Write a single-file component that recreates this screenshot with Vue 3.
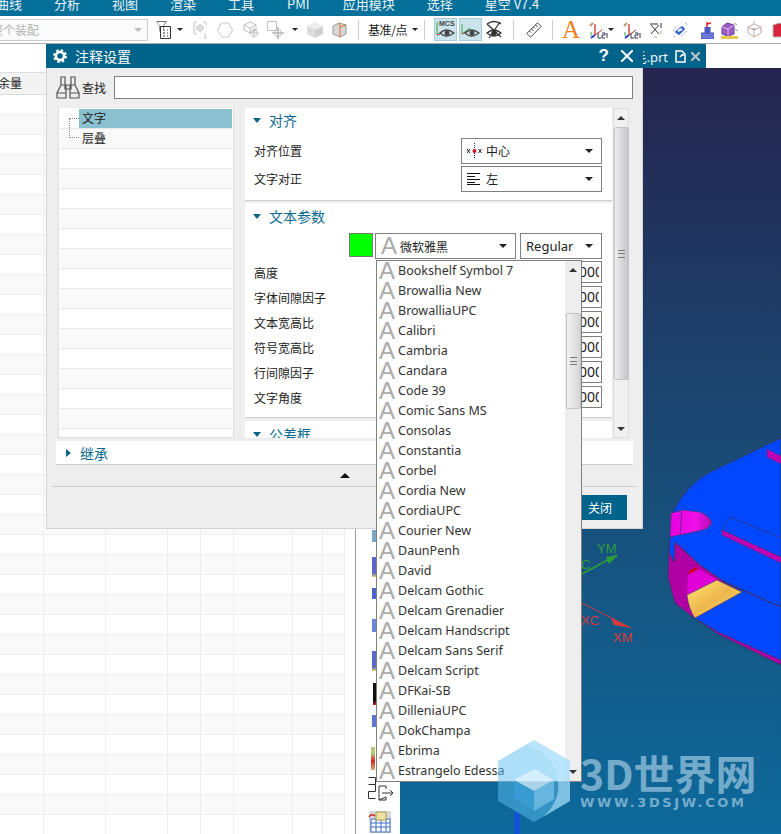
<script setup>
const menus = ['曲线', '分析', '视图', '渲染', '工具', 'PMI', '应用模块', '选择', '星空 V7.4']
const colWidths = [44, 62, 62, 33, 33, 59, 30, 22]
const tableRows = Array.from({ length: 37 }, (_, i) => i)
const treeRows = Array.from({ length: 17 }, (_, i) => i)
const treeLabels = ['文字', '层叠']
const paramLabels = ['高度', '字体间隙因子', '文本宽高比', '符号宽高比', '行间隙因子', '文字角度']
const fonts = [
  'Bookshelf Symbol 7', 'Browallia New', 'BrowalliaUPC', 'Calibri', 'Cambria', 'Candara',
  'Code 39', 'Comic Sans MS', 'Consolas', 'Constantia', 'Corbel', 'Cordia New', 'CordiaUPC',
  'Courier New', 'DaunPenh', 'David', 'Delcam Gothic', 'Delcam Grenadier', 'Delcam Handscript',
  'Delcam Sans Serif', 'Delcam Script', 'DFKai-SB', 'DilleniaUPC', 'DokChampa', 'Ebrima',
  'Estrangelo Edessa'
]
</script>

<template>
  <div class="app">
    <div class="menu">
      <span v-for="m in menus" :key="m" class="menu-item">{{ m }}</span>
    </div>

    <div class="toolbar">
      <div class="scope-combo"><span class="scope-text">整个装配</span><i class="caret grey"></i></div>

      <svg class="ic-filter" width="16" height="20" viewBox="0 0 16 20" fill="none" stroke="#333">
        <path d="M.5 1.500h10l-3 4v3" stroke="#777" /><path d="M.5 1.500l3 4v6" stroke="#999" /><path d="M4.500 6.500h10v12h-10z" /><path d="M7 10h2M11 10h1M7 13h2M11 13h1M7 16h2M11 16h1" />
      </svg>
      <i class="caret ml5"></i>
      <svg class="ic-sel" width="17" height="20" viewBox="0 0 17 20" fill="none" stroke="#c4c4c4">
        <path d="M4 2H1v12h3M10 2h3v3" /><circle cx="7" cy="8" r="3" /><path d="M3 8h8M7 4v8M11 13l2 3-2 2h3" />
      </svg>
      <svg class="ic-hex" width="16" height="16" viewBox="0 0 16 16" fill="none" stroke="#c8c8c8"><path d="M4.500 1h7l4 7-4 7h-7l-4-7z" /></svg>
      <svg class="ic-cube" width="16" height="18" viewBox="0 0 16 18" fill="none" stroke="#c0c0c0">
        <path d="M1 4l6-3 6 3v5l-6 3-6-3zM1 4l6 3 6-3M7 7v5" /><circle cx="11" cy="12" r="3.500" /><path d="M6 12h10M11 7v10" />
      </svg>
      <svg class="ic-cross" width="18" height="20" viewBox="0 0 18 20" fill="none" stroke="#c0c0c0">
        <path d="M.5 1.500h9v9h-9z" /><circle cx="11" cy="13" r="3.500" /><path d="M5 13h12M11 7v12" stroke="#999" />
      </svg>
      <i class="caret ml7"></i>
      <svg class="ic-gcube" width="16" height="16" viewBox="0 0 16 16">
        <path d="M8 0l8 4-8 4-8-4z" fill="#ececec" /><path d="M0 4l8 4v8l-8-4z" fill="#dcdcdc" /><path d="M16 4l-8 4v8l8-4z" fill="#d0d0d0" />
      </svg>
      <svg class="ic-ocube" width="15" height="16" viewBox="0 0 15 16">
        <path d="M1 4l6-3 7 2v9l-6 3-7-3z" fill="#d8d8d8" stroke="#999" /><path d="M8 15V5l6-2M7 1l1 4" fill="none" stroke="#e2742a" />
      </svg>
      <i class="sep sep-a"></i>
      <span class="datum">基准/点</span>
      <i class="caret ml6"></i>
      <i class="sep sep-b"></i>

      <div class="toggle ic-mcs">
        <svg width="21" height="21" viewBox="0 0 21 21" fill="none">
          <path d="M2 3v13" stroke="#3aa64a" /><path d="M2 16l5-3" stroke="#3aa64a" /><path d="M2 16l3-1" stroke="#d33" />
          <path d="M5 14q6-6 14 0q-8 6-14 0z" stroke="#444" stroke-width="1.300" /><circle cx="12" cy="14" r="2.500" fill="#444" />
          <text x="4" y="7" class="mcs-text">MCS</text>
        </svg>
      </div>
      <div class="toggle ic-eye">
        <svg width="21" height="21" viewBox="0 0 21 21" fill="none">
          <path d="M2 5v10" stroke="#3aa64a" /><path d="M2 15l8-6" stroke="#3aa64a" /><path d="M2 15l4-2" stroke="#d33" />
          <path d="M5 14q6-6 14 0q-8 6-14 0z" stroke="#444" stroke-width="1.300" /><circle cx="12" cy="14" r="2.500" fill="#444" />
        </svg>
      </div>
      <svg class="ic-eyeoff" width="16" height="20" viewBox="0 0 16 20" fill="none" stroke="#333" stroke-width="1.300">
        <path d="M1 4q7-5 14 0M1 4l14 13" /><path d="M1 13q7-6 14 0q-7 6-14 0z" /><circle cx="8" cy="13" r="2" fill="#333" /><path d="M14 2L3 18" />
      </svg>
      <i class="sep sep-c"></i>
      <svg class="ic-ruler" width="16" height="16" viewBox="0 0 16 16" fill="none" stroke="#444">
        <path d="M11.500.800l3.700 3.700L4.500 15.200.800 11.500zM9.500 3l2 2M7.500 5l1.500 1.500M5.500 7l2 2M3.500 9l1.500 1.500" />
      </svg>
      <i class="sep sep-d"></i>
      <span class="big-a">A</span>
      <svg class="ic-axes" width="21" height="20" viewBox="0 0 21 20" fill="none">
        <path d="M7 4v11" stroke="#c33" stroke-width="1.300" /><path d="M7 15l7-5" stroke="#c33" /><path d="M7 15l-4 3" stroke="#2a3fc4" stroke-width="2" /><path d="M3 12v4" stroke="#3aa64a" />
        <path d="M2 6l3-3" stroke="#b89a70" stroke-width="2" /><path d="M10 13v5h3M14 13h3v2h-3v3h3M19 13v5" stroke="#335" />
      </svg>
      <i class="caret ml-1"></i>
      <svg class="ic-axes2" width="18" height="20" viewBox="0 0 18 20" fill="none">
        <path d="M6 4v11" stroke="#c33" stroke-width="1.300" /><path d="M6 15l7-5" stroke="#c33" /><path d="M6 15l-4 3" stroke="#2a3fc4" stroke-width="2" /><path d="M2 12v4" stroke="#3aa64a" />
        <path d="M1 6l3-3" stroke="#b89a70" stroke-width="2" /><path d="M8 13v5h3M12 13h3v2h-3v3h3M17 13v5" stroke="#335" />
      </svg>
      <svg class="ic-x" width="14" height="18" viewBox="0 0 14 18" fill="none" stroke="#333">
        <path d="M1 3h8M12 2v5M2 4l8 9M10 4L2 13" /><path d="M12 10v3M5 16h3" stroke="#c9a06a" />
      </svg>
      <svg class="ic-blue" width="17" height="16" viewBox="0 0 17 16" fill="none">
        <path d="M3 10l7-6 3 3-6 6z" fill="#3a62d0" stroke="#6a8ee0" /><path d="M6 9l4-2" stroke="#fff" stroke-width="2" /><path d="M1 14l2 1M13 1l3 2M1 9l4-5M9 14l6-5" stroke="#8aa8e8" stroke-dasharray="2 1" />
      </svg>
      <svg class="ic-pin" width="13" height="18" viewBox="0 0 13 18">
        <path d="M6 1v6M6 3l4-1" stroke="#d22" stroke-width="1.500" fill="none" /><rect x="3.500" y="6" width="6" height="7" fill="#4a58c0" /><rect x="0" y="12" width="13" height="6" fill="#6e78d8" stroke="#4a58c0" />
      </svg>
      <svg class="ic-box" width="17" height="18" viewBox="0 0 17 18">
        <path d="M1 6l5-4 7 2v9l-6 2-6-2z" fill="#9b5cc4" stroke="#6a3a98" /><path d="M1 6l6 2 6-4M7 8v7" fill="none" stroke="#d8b8f0" /><path d="M0 15h17v3H0z" fill="#e8c84a" /><path d="M13 2l3 2M14 8l3 2" stroke="#c88" />
      </svg>
      <svg class="ic-wire" width="15" height="18" viewBox="0 0 15 18" fill="none" stroke="#c8a8a8">
        <path d="M1 6l6-3 7 3-7 3zM1 6v6l6 4 7-4V6M7 9v7M7 0v3M14 9h1" /><path d="M5 8l4 0" stroke="#999" />
      </svg>
      <svg class="ic-red" width="17" height="18" viewBox="0 0 17 18"><path d="M1 4l6-2 9 2v12H1z" fill="#d8243a" stroke="#bbb" /></svg>
    </div>

    <div class="workspace">
      <div class="table">
        <div class="table-head"><span class="table-title">余量</span></div>
        <div v-for="r in tableRows" :key="r" class="table-row" :class="{ tint: r % 2 === 1 }">
          <span v-for="(w, c) in colWidths" :key="c" class="table-cell" :style="{ width: w + 'px' }"></span>
        </div>
      </div>

      <div class="side-tools">
        <i class="peek peek-1"></i><i class="peek peek-2"></i><i class="peek peek-3"></i><i class="peek peek-4"></i>
        <i class="peek peek-5"></i><i class="peek peek-6"></i><i class="peek peek-7"></i><i class="peek peek-8"></i>
        <svg class="side-exit" width="26" height="26" viewBox="0 0 26 26" fill="none" stroke="#333">
          <path d="M.5 .5h7v7h-7M7.500 7.500v7h-7v7h7" /><path d="M11 9h7v3M18 20v3h-7zM11 9v14M14 16h11M22 13l3 3-3 3" />
        </svg>
        <svg class="side-table" width="24" height="24" viewBox="0 0 24 24">
          <rect x="1" y="1" width="22" height="22" fill="#d8d8d8" /><rect x="3" y="9" width="19" height="13" fill="#fff" stroke="#3a6cc8" />
          <path d="M3 13h19M3 17h19M8 9v13M13 9v13M18 9v13" stroke="#3a6cc8" /><path d="M8 2h10v8H8z" fill="#efe2a0" stroke="#a89850" />
          <path d="M1 7q3-4 6-1" fill="none" stroke="#c22" stroke-width="1.500" />
        </svg>
      </div>

      <div class="viewport">
        <div class="tabs">
          <div class="tab">
            <span class="tab-name">毛.prt</span>
            <svg width="11" height="13" viewBox="0 0 11 13" fill="none" stroke="#fff" stroke-width="1.500"><path d="M1 1h6l3 3v8H1zM5 7l3-3M8 4v2" /></svg>
            <svg class="tab-close" width="9" height="9" viewBox="0 0 9 9" stroke="#b8c4ca" stroke-width="2"><path d="M0 0l9 9M9 0L0 9" /></svg>
          </div>
        </div>
        <div class="canvas">
          <svg class="scene" viewBox="400 68 381 766" width="381" height="766">
            <defs>
              <linearGradient id="yellow-face" x1="0" y1="0" x2="1" y2="1">
                <stop offset="0" stop-color="#ffe877" /><stop offset=".5" stop-color="#eeb64c" /><stop offset="1" stop-color="#ffe070" />
              </linearGradient>
              <linearGradient id="notch-face" x1="0" y1="0" x2="1" y2="0">
                <stop offset="0" stop-color="#e600e0" /><stop offset=".6" stop-color="#f010e8" /><stop offset="1" stop-color="#b010b0" />
              </linearGradient>
            </defs>
            <path d="M669 540L668 577L672 593L675 603L690 615L718 634L781 665V600L690 540Z" fill="#b000a4" stroke="#343a68" />
            <path d="M781 438L710 472Q685 486 673 512L670 537L669 552L674 562L675 542L700 565L723 581L781 607Z" fill="#0047ff" stroke="#343a68" />
            <path d="M671 513L683 510L700 512Q708 515 712 522Q710 528 703 530L680 535L670 537Z" fill="url(#notch-face)" stroke="#343a68" stroke-width=".7" />
            <path d="M682 511L680 535" stroke="#343a68" stroke-width=".7" />
            <path d="M781 538L730 517L722 530L781 558Z" fill="#0047ff" stroke="#343a68" stroke-width=".7" />
            <path d="M722 530L781 557V563L722 535Z" fill="#c000b4" stroke="#343a68" stroke-width=".5" />
            <path d="M767 449L781 456V464L767 457Z" fill="#c000b4" stroke="#343a68" stroke-width=".5" />
            <path d="M695 618L742 592L723 582L781 607V660L718 632Z" fill="#0047ff" stroke="#343a68" stroke-width=".7" />
            <path d="M688 573Q692 567 699 568L692 574Z" fill="#d00020" />
            <path d="M688 575L699 569L717 580L687 595Z" fill="#e000d8" />
            <path d="M687 595L717 580L742 592L695 618Q689 610 687 595Z" fill="url(#yellow-face)" stroke="#343a68" stroke-width=".5" />

            <path d="M582 574L617 555" stroke="#2e9e3a" stroke-width="1.500" />
            <path d="M606 557L618 555L609 564Z" fill="#2e9e3a" />
            <text x="597" y="553" class="axis green">YM</text>
            <text x="581" y="569" class="axis green">C</text>
            <path d="M582 603L631 628" stroke="#d83a3a" />
            <path d="M611 618L631 628L614 625Z" fill="#d83a3a" />
            <text x="581" y="625" class="axis red">XC</text>
            <text x="613" y="642" class="axis red">XM</text>
            <path d="M517 812V834" stroke="#1450e0" stroke-width="5" />
            <text x="514" y="798" class="axis blue">Z</text>
          </svg>
        </div>
      </div>
    </div>

    <section class="dialog">
      <header class="dialog-title">
        <svg width="14" height="14" viewBox="0 0 14 14" fill="none" stroke="#fff">
          <circle cx="7" cy="7" r="4" stroke-width="2.500" /><circle cx="7" cy="7" r="5.800" stroke-width="2.200" stroke-dasharray="2.500 2.050" />
        </svg>
        <span class="dialog-name">注释设置</span>
        <span class="help">?</span>
        <svg class="dialog-close" width="12" height="12" viewBox="0 0 12 12" stroke="#fff" stroke-width="2"><path d="M0 0l12 12M12 0L0 12" /></svg>
      </header>

      <div class="search">
        <svg width="24" height="23" viewBox="0 0 24 23" fill="none" stroke="#555" stroke-width="1.200">
          <path d="M5 1h4v8h-4zM15 1h4v8h-4zM9 9h6v4H9zM5 9L1 17v5h9V9M19 9l4 8v5h-9V9M1 17h9M14 17h9" />
        </svg>
        <span class="search-label">查找</span>
        <div class="search-input"></div>
      </div>

      <div class="columns">
        <div class="tree">
          <div v-for="r in treeRows" :key="r" class="tree-row" :class="{ tint: r % 2 === 1 }">
            <span v-if="treeLabels[r]" class="tree-label" :class="{ selected: r === 0 }">{{ treeLabels[r] }}</span>
          </div>
          <i class="tree-guide"></i>
        </div>

        <div class="panel">
          <div class="panel-body">
            <div class="group">
              <div class="group-head raised"><i class="tri-down"></i>对齐</div>
              <div class="field first-field">
                <label>对齐位置</label>
                <div class="combo wide">
                  <svg width="15" height="16" viewBox="0 0 15 16"><path d="M7.500 0v16" stroke="#226" stroke-dasharray="1 1" /><circle cx="7.500" cy="8" r="2" fill="#d01020" /><path d="M0 6l3 4M3 6l-3 4M11.500 6l3 4M14.500 6l-3 4" stroke="#222" /></svg>
                  <span class="center-text">中心</span><i class="caret end"></i>
                </div>
              </div>
              <div class="field">
                <label>文字对正</label>
                <div class="combo wide">
                  <svg width="13" height="12" viewBox="0 0 13 12" stroke="#111"><path d="M0 .5h13M0 3.500h8M0 6.500h13M0 9.500h8M0 11.500h13" /></svg>
                  <span>左</span><i class="caret end"></i>
                </div>
              </div>
            </div>

            <div class="group">
              <div class="group-head"><i class="tri-down"></i>文本参数</div>
              <div class="font-row">
                <i class="swatch"></i>
                <div class="combo font-combo"><span class="font-a">A</span><span>微软雅黑</span><i class="caret end"></i></div>
                <div class="combo style-combo"><span class="latin">Regular</span><i class="caret end"></i></div>
              </div>
              <div v-for="p in paramLabels" :key="p" class="param">
                <label>{{ p }}</label>
                <div class="param-input"><span class="param-value">1.000000000000</span></div>
              </div>
            </div>

            <div class="group last-group">
              <div class="group-head"><i class="tri-down"></i>公差框</div>
            </div>
          </div>

          <div class="scrollbar">
            <i class="arrow-up"></i>
            <div class="thumb"><i class="grip"></i></div>
            <i class="arrow-down"></i>
          </div>
        </div>
      </div>

      <div class="inherit"><i class="tri-right"></i>继承</div>
      <div class="collapse"><i class="arrow-up dark"></i></div>
      <footer class="dialog-foot"><button class="close-btn">关闭</button></footer>
    </section>

    <div class="font-list">
      <ul>
        <li v-for="f in fonts" :key="f"><span class="font-a">A</span><span class="font-name">{{ f }}</span></li>
      </ul>
      <div class="list-scroll">
        <i class="arrow-up"></i>
        <div class="list-thumb"><i class="grip"></i></div>
        <i class="arrow-down"></i>
      </div>
    </div>

    <div class="watermark">
      <svg width="74" height="84" viewBox="0 0 74 84">
        <path d="M37 1l36 21v40L37 83 1 62V22z" fill="#5cc0f2" opacity=".5" />
        <path d="M37 1l36 21v40L46 78Q66 60 60 36Q54 14 30 6z" fill="#c8ecff" opacity=".5" />
        <path d="M37 30l20 11-20 11-20-11z" fill="#eaf8ff" opacity=".65" />
        <path d="M17 41l20 11v20L17 60z" fill="#3aa4dc" opacity=".55" />
        <path d="M57 41L37 52v20l20-12z" fill="#8ed4f6" opacity=".55" />
      </svg>
      <div class="mark-text">
        <div class="mark-title">3D世界网</div>
        <div class="mark-url">WWW.3DSJW.COM</div>
      </div>
    </div>
  </div>
</template>

<style>
html, body {
  margin: 0;
  background: #fff;
}
</style>

<style scoped>
.app {
  position: relative;
  width: 781px;
  height: 834px;
  overflow: hidden;
  display: flex;
  flex-direction: column;
  background: #fff;
  font-family: "Noto Sans CJK SC", "Noto Sans", sans-serif;
  font-size: 12px;
  color: #222;
}

i {
  display: block;
  flex: none;
}

/* Menu */
.menu {
  flex: none;
  height: 16px;
  display: flex;
  gap: 32px;
  background: #04709a;
  color: #e8f2f6;
  font-size: 13px;
  line-height: 8px;
  margin-left: -4px;
  width: 785px;
}

.menu-item {
  height: 8px;
  white-space: nowrap;
}

.menu-item:nth-child(6) {
  margin: 0 1px;
}

/* Toolbar */
.toolbar {
  flex: none;
  height: 28px;
  box-sizing: border-box;
  display: flex;
  align-items: center;
  border-bottom: 1px solid #aaa;
  background: #fff;
  overflow: hidden;
}

.toolbar > * {
  flex: none;
}

.scope-combo {
  width: 148px;
  height: 22px;
  box-sizing: border-box;
  border: 1px solid #ccc;
  border-left: 0;
  display: flex;
  align-items: center;
  justify-content: flex-end;
  padding-right: 5px;
  overflow: hidden;
  background: #fbfbfb;
  color: #b4b4b4;
  font-size: 12px;
}

.scope-text {
  margin-right: 95px;
  white-space: nowrap;
}

.caret {
  width: 0;
  height: 0;
  border-left: 3px solid transparent;
  border-right: 3px solid transparent;
  border-top: 3px solid #222;
}

.caret.grey {
  border-top-color: #bbb;
  border-left-width: 4px;
  border-right-width: 4px;
  border-top-width: 4px;
}

.caret.end {
  margin-left: auto;
  border-left-width: 4px;
  border-right-width: 4px;
  border-top-width: 4px;
}

.sep {
  width: 1px;
  height: 20px;
  background: #ccc;
}

.ic-filter { margin-left: 8px; }
.ml5 { margin-left: 5px; }
.ic-sel { margin-left: 10px; }
.ic-hex { margin-left: 7px; }
.ic-cube { margin-left: 10px; }
.ic-cross { margin-left: 8px; }
.ml7 { margin-left: 7px; }
.ic-gcube { margin-left: 9px; }
.ic-ocube { margin-left: 9px; }
.sep-a { margin-left: 11px; }
.datum { margin-left: 9px; width: 38px; font-size: 12px; white-space: nowrap; letter-spacing: -.4px; }
.ml6 { margin-left: 6px; }
.sep-b { margin-left: 6px; }
.ic-mcs { margin-left: 9px; }
.ic-eye { margin-left: 2px; }
.ic-eyeoff { margin-left: 4px; }
.sep-c { margin-left: 11px; }
.ic-ruler { margin-left: 12px; }
.sep-d { margin-left: 10px; }
.ic-axes { margin-left: 8px; }
.ml-1 { margin-left: -1px; }
.ic-axes2 { margin-left: 9px; }
.ic-x { margin-left: 8px; }
.ic-blue { margin-left: 9px; }
.ic-pin { margin-left: 12px; }
.ic-box { margin-left: 7px; }
.ic-wire { margin-left: 9px; }
.ic-red { margin-left: 10px; }

.toggle {
  width: 23px;
  height: 23px;
  box-sizing: border-box;
  background: #cbe4eb;
  border: 1px solid #a8cfd9;
  display: flex;
}

.mcs-text {
  font-family: "Liberation Sans", sans-serif;
  font-size: 7px;
  font-weight: 700;
  fill: #444;
}

.big-a {
  margin-left: 9px;
  width: 18px;
  font-family: "Liberation Serif", serif;
  font-size: 25px;
  line-height: 24px;
  text-align: center;
  color: #ee7f1a;
}

/* Main area */
.workspace {
  flex: 1;
  min-height: 0;
  display: flex;
}

.table {
  flex: none;
  width: 356px;
  box-sizing: border-box;
  padding-top: 28px;
  border-right: 1px solid #999;
  overflow: hidden;
}

.table-head {
  height: 23px;
  box-sizing: border-box;
  width: 344px;
  border-top: 1px solid #ddd;
  border-bottom: 1px solid #ddd;
  background: #f3f3f3;
}

.table-title {
  display: block;
  margin-left: -2px;
  font-size: 12px;
  line-height: 19px;
  color: #222;
}

.table-row {
  display: flex;
  height: 20px;
  box-sizing: border-box;
  width: 345px;
  border-bottom: 1px solid #eee;
}

.table-row.tint {
  background: #f9f9f9;
}

.table-cell {
  flex: none;
  box-sizing: border-box;
  border-right: 1px solid #eee;
}

.side-tools {
  flex: none;
  position: relative;
  width: 44px;
}

.peek {
  position: absolute;
  width: 4px;
}

.peek-1 { left: 16px; top: 486px; height: 12px; background: #7aa8cc; }
.peek-2 { left: 16px; top: 513px; height: 20px; background: linear-gradient(#5a66c8 80%, #e8d060); }
.peek-3 { left: 16px; top: 544px; height: 11px; background: #4a62c8; }
.peek-4 { left: 16px; top: 575px; height: 13px; background: #6a86d8; }
.peek-5 { left: 16px; top: 607px; height: 20px; background: linear-gradient(#5a6ac8 80%, #e8d060); }
.peek-6 { left: 17px; top: 639px; height: 22px; background: linear-gradient(#111 80%, #d22); }
.peek-7 { left: 16px; top: 671px; height: 12px; background: #5a76d0; }
.peek-8 { left: 15px; top: 703px; height: 23px; background: linear-gradient(#b8c878 30%, #d22 60%, #c8b878); }

.side-exit {
  position: absolute;
  left: 12px;
  top: 733px;
}

.side-tools .side-table {
  position: absolute;
  left: 12px;
  top: 766px;
}

.viewport {
  flex: 1;
  display: flex;
  flex-direction: column;
  min-width: 0;
}

.tabs {
  flex: none;
  height: 24px;
  display: flex;
  background: #fff;
}

.tab {
  width: 306px;
  box-sizing: border-box;
  display: flex;
  align-items: center;
  justify-content: flex-end;
  gap: 7px;
  padding-right: 6px;
  background: #00638a;
  color: #eef5f8;
  font-family: "Noto Sans", "Noto Sans CJK SC", sans-serif;
  font-size: 13px;
}

.tab-close {
  margin-left: -2px;
}

.canvas {
  flex: 1;
  min-height: 0;
  background: linear-gradient(#25244e 0%, #1a4a75 50%, #0d6a9c 100%);
}

.scene {
  display: block;
}

.axis {
  font-family: "Liberation Sans", sans-serif;
  font-size: 13px;
}

.axis.green { fill: #2e9e3a; }
.axis.red { fill: #d83a3a; }
.axis.blue { fill: #1450e0; }

/* Dialog */
.dialog {
  position: absolute;
  left: 46px;
  top: 44px;
  width: 597px;
  height: 485px;
  box-sizing: border-box;
  background: #eee;
  border: 1px solid #d4d4d4;
  border-top: 0;
  display: flex;
  flex-direction: column;
}

.dialog-title {
  flex: none;
  margin: 0 -1px;
  height: 24px;
  box-sizing: border-box;
  display: flex;
  align-items: center;
  padding: 0 10px 0 7px;
  background: #00638a;
  color: #fff;
}

.dialog-name {
  margin-left: 8px;
  font-size: 14px;
}

.help {
  margin-left: auto;
  font-family: "Liberation Sans", sans-serif;
  font-size: 17px;
  font-weight: 700;
}

.dialog-close {
  margin-left: 12px;
}

.search {
  flex: none;
  display: flex;
  align-items: center;
  height: 23px;
  margin-top: 8px;
  padding: 0 9px;
}

.search-label {
  margin-left: 2px;
  font-size: 12px;
}

.search-input {
  flex: 1;
  height: 23px;
  box-sizing: border-box;
  margin-left: 8px;
  background: #fff;
  border: 1px solid #808080;
}

.columns {
  flex: none;
  display: flex;
  gap: 11px;
  height: 330px;
  margin-top: 9px;
  padding-left: 11px;
}

.tree {
  position: relative;
  width: 176px;
  box-sizing: border-box;
  background: #fff;
  border: 1px solid #ddd;
  border-top: 0;
  padding: 1px 1px 0;
  overflow: hidden;
}

.tree-row {
  height: 20px;
  box-sizing: border-box;
  border-bottom: 1px solid #e8e8e8;
}

.tree-row.tint {
  background: #f9f9f9;
}

.tree-label {
  display: block;
  height: 19px;
  margin-left: 19px;
  padding-left: 3px;
  line-height: 17px;
  font-size: 12px;
}

.tree-label.selected {
  background: #8ac0d0;
}

.tree-guide {
  position: absolute;
  left: 10px;
  top: 10px;
  width: 10px;
  height: 20px;
  box-sizing: border-box;
  border-left: 1px dotted #888;
  border-top: 1px dotted #888;
  border-bottom: 1px dotted #888;
}

.panel {
  display: flex;
  width: 385px;
  min-height: 0;
}

.panel-body {
  width: 367px;
  overflow: hidden;
  box-sizing: border-box;
}

.group {
  background: #fff;
  border-bottom: 1px solid #ccc;
  margin-bottom: 3px;
}

.group:first-child {
  height: 93px;
  margin-bottom: 2px;
  box-sizing: border-box;
}

.group:nth-child(2) {
  height: 215px;
  box-sizing: border-box;
}

.last-group {
  border-bottom: 0;
  margin-bottom: 0;
}

.group-head {
  height: 26px;
  display: flex;
  align-items: center;
  gap: 8px;
  padding-left: 8px;
  font-size: 14px;
  color: #0a6a8e;
}

.group-head.raised {
  height: 24px;
  padding-bottom: 2px;
}

.field {
  display: flex;
  align-items: center;
  justify-content: space-between;
  height: 26px;
  margin-top: 2px;
  padding: 0 10px 0 9px;
}

.first-field {
  margin-top: 4px;
}

.field label,
.combo.wide span {
  padding-bottom: 2px;
}

.field label,
.param label {
  font-size: 12px;
}

.center-text {
  margin-left: -2px;
}

.tri-down {
  width: 0;
  height: 0;
  border-left: 4.500px solid transparent;
  border-right: 4.500px solid transparent;
  border-top: 5px solid #0a6487;
}

.tri-right {
  width: 0;
  height: 0;
  border-top: 4.500px solid transparent;
  border-bottom: 4.500px solid transparent;
  border-left: 5px solid #0a6487;
}

.combo {
  height: 26px;
  box-sizing: border-box;
  display: flex;
  align-items: center;
  gap: 6px;
  padding: 0 8px 0 5px;
  background: #fff;
  border: 1px solid #808080;
  font-size: 12px;
}

.combo.wide {
  width: 141px;
}

.font-row {
  display: flex;
  justify-content: flex-end;
  align-items: flex-start;
  gap: 2px;
  height: 28px;
  margin-top: 4px;
  padding-right: 10px;
}

.swatch {
  width: 24px;
  height: 24px;
  box-sizing: border-box;
  background: #00ff00;
  border: 1px solid #777;
}

.font-combo {
  width: 141px;
  padding-left: 5px;
  gap: 3px;
}

.style-combo {
  width: 82px;
  margin-left: 2px;
}

.latin {
  font-family: "Noto Sans", sans-serif;
  font-size: 13px;
}

.font-a {
  flex: none;
  width: 16px;
  font-family: "Liberation Sans", sans-serif;
  font-size: 24px;
  line-height: 20px;
  text-align: center;
  color: #aaa;
}

.param {
  display: flex;
  align-items: center;
  justify-content: space-between;
  height: 22px;
  margin-bottom: 3px;
  padding: 0 10px 0 9px;
}

.param-input {
  width: 141px;
  height: 22px;
  box-sizing: border-box;
  padding-right: 2px;
  border: 1px solid #808080;
  background: #fff;
}

.param-value {
  display: block;
  overflow: hidden;
  direction: rtl;
  text-indent: -4px;
  font-family: "Noto Sans", sans-serif;
  font-size: 14px;
  line-height: 20px;
  white-space: nowrap;
}

.scrollbar {
  position: relative;
  width: 16px;
  margin-left: 1px;
  box-sizing: border-box;
  background: #f0f0f0;
  border: 1px solid #ddd;
  display: flex;
  flex-direction: column;
  align-items: center;
}

.arrow-up {
  width: 0;
  height: 0;
  border-left: 4px solid transparent;
  border-right: 4px solid transparent;
  border-bottom: 4px solid #333;
}

.arrow-down {
  width: 0;
  height: 0;
  border-left: 4px solid transparent;
  border-right: 4px solid transparent;
  border-top: 4px solid #333;
}

.scrollbar .arrow-up {
  margin-top: 7px;
}

.scrollbar .arrow-down {
  margin-top: 47px;
}

.thumb {
  width: 15px;
  height: 253px;
  margin-top: 7px;
  box-sizing: border-box;
  border: 1px solid #c4c4c4;
  border-radius: 2px;
  background: linear-gradient(90deg, #eee, #c6c6ca);
  display: flex;
  align-items: center;
  justify-content: center;
}

.grip {
  width: 7px;
  height: 6px;
  border-top: 1px solid #777;
  border-bottom: 1px solid #777;
  background: linear-gradient(#777, #777) center / 100% 1px no-repeat;
}

.inherit {
  flex: none;
  display: flex;
  align-items: center;
  gap: 9px;
  height: 24px;
  box-sizing: border-box;
  margin: 3px 9px 0;
  padding-left: 10px;
  background: #fff;
  border-bottom: 1px solid #ccc;
  font-size: 14px;
  color: #0a6a8e;
}

.collapse {
  flex: none;
  display: flex;
  justify-content: center;
  align-items: center;
  height: 21px;
  margin: 0 5px;
  border-bottom: 1px solid #d0d0d0;
}

.arrow-up.dark {
  border-left-width: 5px;
  border-right-width: 5px;
  border-bottom: 5px solid #111;
}

.dialog-foot {
  flex: 1;
  display: flex;
  justify-content: flex-end;
  padding: 8px 15px 0 0;
}

.close-btn {
  width: 54px;
  height: 25px;
  border: 0;
  padding: 0;
  background: #00638a;
  color: #fff;
  font: inherit;
}

/* Font dropdown */
.font-list {
  position: absolute;
  left: 376px;
  top: 260px;
  width: 206px;
  height: 522px;
  box-sizing: border-box;
  display: flex;
  background: #fff;
  border: 1px solid #808080;
}

.font-list ul {
  flex: 1;
  margin: 0;
  padding: 0;
  list-style: none;
}

.font-list li {
  display: flex;
  align-items: center;
  height: 20px;
  padding-left: 2px;
}

.font-name {
  margin-left: 3px;
  padding-bottom: 2px;
  font-family: "Noto Sans", sans-serif;
  font-size: 12.500px;
  color: #333;
  white-space: nowrap;
}

.list-scroll {
  flex: none;
  width: 16px;
  background: #eee;
  display: flex;
  flex-direction: column;
  align-items: center;
}

.list-scroll .arrow-up {
  margin-top: 7px;
}

.list-thumb {
  width: 15px;
  height: 96px;
  margin-top: 41px;
  box-sizing: border-box;
  border: 1px solid #c4c4c4;
  border-radius: 2px;
  background: linear-gradient(90deg, #f2f2f2, #d6d6d8);
  display: flex;
  align-items: center;
  justify-content: center;
}

.list-scroll .arrow-down {
  margin-top: auto;
  margin-bottom: 7px;
}

/* Watermark */
.watermark {
  position: absolute;
  left: 497px;
  top: 739px;
  display: flex;
  gap: 9px;
  pointer-events: none;
}

.mark-text {
  display: flex;
  flex-direction: column;
  color: rgba(196, 226, 244, .58);
}

.mark-title {
  margin-top: 10px;
  font-family: "Noto Sans CJK SC", sans-serif;
  font-size: 41px;
  font-weight: 700;
  line-height: 47px;
  white-space: nowrap;
}

.mark-url {
  font-family: "DejaVu Sans", sans-serif;
  font-size: 13px;
  font-weight: 700;
  letter-spacing: 2.600px;
  line-height: 14px;
  white-space: nowrap;
}
</style>
